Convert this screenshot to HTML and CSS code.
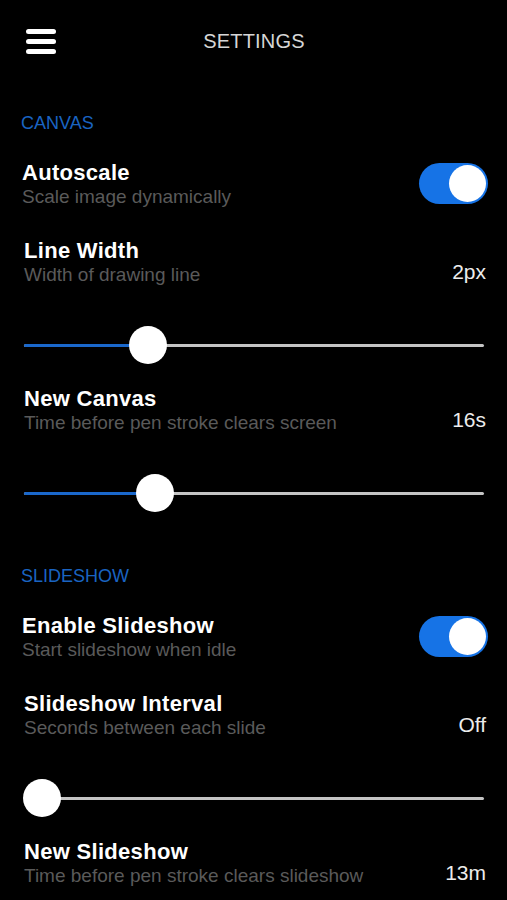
FILE: index.html
```html
<!DOCTYPE html>
<html>
<head>
<meta charset="utf-8">
<link rel="stylesheet" href="styles.css">
</head>
<body>
<div class="screen">
  <header class="topbar">
    <div class="menu"><span></span><span></span><span></span></div>
    <div class="title">SETTINGS</div>
  </header>

  <section class="section section-canvas">
    <div class="section-label">CANVAS</div>

    <div class="row toggle-row">
      <div class="text">
        <div class="name">Autoscale</div>
        <div class="desc">Scale image dynamically</div>
      </div>
      <div class="switch"><div class="knob"></div></div>
    </div>

    <div class="slider-item first">
      <div class="row">
        <div class="text">
          <div class="name">Line Width</div>
          <div class="desc">Width of drawing line</div>
        </div>
        <div class="value">2px</div>
      </div>
      <div class="slider">
        <div class="fill" style="width:124px"></div>
        <div class="knob" style="left:105px"></div>
      </div>
    </div>

    <div class="slider-item">
      <div class="row">
        <div class="text">
          <div class="name">New Canvas</div>
          <div class="desc">Time before pen stroke clears screen</div>
        </div>
        <div class="value">16s</div>
      </div>
      <div class="slider">
        <div class="fill" style="width:131px"></div>
        <div class="knob" style="left:112px"></div>
      </div>
    </div>
  </section>

  <section class="section section-slideshow">
    <div class="section-label">SLIDESHOW</div>

    <div class="row toggle-row">
      <div class="text">
        <div class="name">Enable Slideshow</div>
        <div class="desc">Start slideshow when idle</div>
      </div>
      <div class="switch"><div class="knob"></div></div>
    </div>

    <div class="slider-item first">
      <div class="row">
        <div class="text">
          <div class="name">Slideshow Interval</div>
          <div class="desc">Seconds between each slide</div>
        </div>
        <div class="value">Off</div>
      </div>
      <div class="slider">
        <div class="fill" style="width:0px"></div>
        <div class="knob" style="left:-1px"></div>
      </div>
    </div>

    <div class="slider-item">
      <div class="row">
        <div class="text">
          <div class="name">New Slideshow</div>
          <div class="desc">Time before pen stroke clears slideshow</div>
        </div>
        <div class="value">13m</div>
      </div>
    </div>
  </section>
</div>
</body>
</html>
```

FILE: styles.css
```css
html, body {
  margin: 0;
  padding: 0;
  background: #000;
}
body {
  font-family: "Liberation Sans", Arial, sans-serif;
  color: #fff;
  width: 507px;
  height: 900px;
  overflow: hidden;
}
.screen {
  width: 507px;
}
.topbar {
  position: relative;
  height: 84px;
  display: flex;
  align-items: center;
  justify-content: center;
}
.menu {
  position: absolute;
  left: 26px;
  top: 29px;
  width: 30px;
  display: flex;
  flex-direction: column;
  gap: 5.5px;
}
.menu span {
  display: block;
  height: 4.5px;
  border-radius: 3px;
  background: #fff;
}
.title {
  font-size: 20px;
  letter-spacing: 0.2px;
  color: #d6d6d6;
  margin-top: -1px;
  margin-left: 1px;
}
.section {
  padding: 0 20px 0 21px;
}
.section-canvas {
  padding-top: 28px;
}
.section-slideshow {
  padding-top: 52px;
}
.section-label {
  font-size: 18px;
  line-height: 22px;
  color: #1a64c2;
  margin-bottom: 27px;
}
.row {
  display: flex;
  justify-content: space-between;
  align-items: flex-start;
}
.name {
  font-size: 22px;
  line-height: 24px;
  font-weight: bold;
  letter-spacing: 0.3px;
  color: #fff;
}
.desc {
  font-size: 19px;
  line-height: 24px;
  color: #5a5a5a;
}
.toggle-row .text {
  margin-left: 1px;
}
.switch {
  position: relative;
  width: 69px;
  height: 41px;
  border-radius: 21px;
  background: #1673e6;
  margin-top: 2px;
  margin-right: -1px;
  flex-shrink: 0;
}
.switch .knob {
  position: absolute;
  right: 2px;
  top: 2px;
  width: 37px;
  height: 37px;
  border-radius: 50%;
  background: #fff;
}
.slider-item {
  padding-left: 3px;
  margin-top: 22px;
}
.slider-item.first {
  margin-top: 30px;
}
.value {
  align-self: flex-end;
  font-size: 21px;
  line-height: 24px;
  color: #ececec;
  margin-bottom: 3px;
  margin-right: 1px;
}
.slider {
  position: relative;
  height: 40px;
  margin-top: 38px;
  width: 460px;
}
.slider::before {
  content: "";
  position: absolute;
  left: 0;
  right: 0;
  top: 18.5px;
  height: 3px;
  background: #c4c4c4;
  border-radius: 2px;
}
.slider .fill {
  position: absolute;
  left: 0;
  top: 18.5px;
  height: 3px;
  background: #1a68cc;
  border-radius: 2px;
}
.slider .knob {
  position: absolute;
  top: 1px;
  width: 38px;
  height: 38px;
  border-radius: 50%;
  background: #fff;
}
```
